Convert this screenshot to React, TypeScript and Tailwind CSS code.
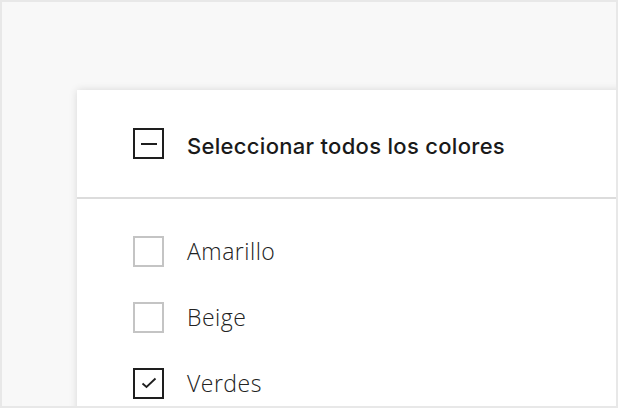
import React from "react";

function Box({ state }: { state: "none" | "some" | "all" }) {
  const dark = state !== "none";
  return (
    <div
      className={`w-[31px] h-[31px] shrink-0 border-2 flex items-center justify-center ${
        dark ? "border-[#1e1e1e]" : "border-[#c4c4c4]"
      }`}
    >
      {state === "some" && <div className="w-[16px] h-[2px] bg-[#1e1e1e]" />}
      {state === "all" && (
        <svg width="16" height="12" viewBox="0 0 16 12" fill="none">
          <path d="M1.5 6.5 L5.5 10 L14.5 1.5" stroke="#1e1e1e" strokeWidth="1.8" />
        </svg>
      )}
    </div>
  );
}

export default function App() {
  const items: { label: string; state: "none" | "all" }[] = [
    { label: "Amarillo", state: "none" },
    { label: "Beige", state: "none" },
    { label: "Verdes", state: "all" },
  ];
  return (
    <div className="w-[619px] h-[409px] bg-white overflow-hidden" style={{ fontFamily: "'Open Sans', Lato, sans-serif" }}>
      <div className="w-[618px] h-[408px] border-2 border-[#e8e8e8] bg-[#f8f8f8] overflow-hidden pl-[75px] pt-[88px]">
        <div className="w-[600px] h-[400px] bg-white shadow-[0_0_8px_rgba(0,0,0,0.13)]">
          <div className="h-[107px] pl-[56px] flex items-center gap-[23px] border-b-2 border-[#dcdcdc] box-content">
            <Box state="some" />
            <span
              className="text-[22px] leading-none pt-[5px] font-medium text-[#1a1a1a] tracking-[0.3px]"
              style={{ fontFamily: "Inter, 'Open Sans', sans-serif" }}
            >
              Seleccionar todos los colores
            </span>
          </div>
          <div className="pt-[19px]">
            {items.map((it) => (
              <div key={it.label} className="h-[66px] pl-[56px] flex items-center gap-[23px]">
                <Box state={it.state} />
                <span className="text-[23px] leading-none font-light text-[#222] tracking-[0.5px]">{it.label}</span>
              </div>
            ))}
          </div>
        </div>
      </div>
    </div>
  );
}
